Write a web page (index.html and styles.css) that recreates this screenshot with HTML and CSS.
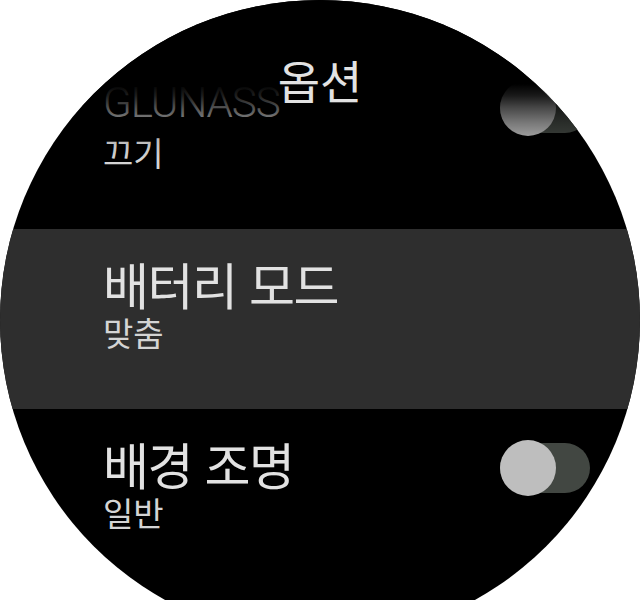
FILE: index.html
```html
<!DOCTYPE html>
<html lang="ko">
<head>
<meta charset="utf-8">
<link rel="stylesheet" href="styles.css">
</head>
<body>
<div class="watch">
  <div class="list">
    <div class="row">
      <div class="texts">
        <div class="title latin">GLUNASS</div>
        <div class="sub">끄기</div>
      </div>
      <div class="toggle"><span class="knob"></span></div>
    </div>
    <div class="row active">
      <div class="texts">
        <div class="title">배터리 모드</div>
        <div class="sub">맞춤</div>
      </div>
    </div>
    <div class="row">
      <div class="texts">
        <div class="title">배경 조명</div>
        <div class="sub">일반</div>
      </div>
      <div class="toggle"><span class="knob"></span></div>
    </div>
  </div>
  <div class="fade"></div>
  <div class="header">옵션</div>
</div>
</body>
</html>
```
FILE: styles.css
```css
html, body {
  margin: 0;
  padding: 0;
  width: 640px;
  height: 600px;
  overflow: hidden;
  background: #ffffff;
}
.watch {
  position: relative;
  width: 640px;
  height: 600px;
  clip-path: circle(320px at 320px 320px);
  background: #000;
  overflow: hidden;
  font-family: "Noto Sans CJK KR", "Noto Sans", sans-serif;
  color: #e2e2e2;
}
.list {
  display: flex;
  flex-direction: column;
  padding-top: 49px;
}
.row {
  height: 180px;
  flex: none;
  box-sizing: border-box;
  padding: 0 50px 0 103px;
  display: flex;
  align-items: flex-start;
  justify-content: space-between;
}
.row.active {
  background: #2e2e2e;
}
.texts {
  display: flex;
  flex-direction: column;
  padding-top: 26px;
}
.title {
  font-size: 50px;
  line-height: 56px;
  letter-spacing: -1.5px;
  white-space: nowrap;
}
.title.latin {
  font-family: Roboto, "Liberation Sans", sans-serif;
  font-weight: 300;
  font-size: 42px;
  letter-spacing: -1px;
  color: #d6d6d6;
}
.sub {
  font-size: 33px;
  line-height: 38px;
  color: #d4d4d4;
  margin-top: 2px;
}
.toggle {
  position: relative;
  margin-top: 34px;
  width: 90px;
  height: 50px;
  border-radius: 25px;
  background: #424742;
}
.knob {
  position: absolute;
  left: 0;
  top: -3px;
  width: 56px;
  height: 56px;
  border-radius: 50%;
  background: #bebebe;
}
.fade {
  position: absolute;
  left: 0;
  top: 0;
  width: 640px;
  height: 170px;
  background: linear-gradient(to bottom, #000 0, #000 84px, rgba(0,0,0,0.86) 96px, rgba(0,0,0,0.62) 108px, rgba(0,0,0,0.38) 122px, rgba(0,0,0,0.12) 140px, rgba(0,0,0,0) 160px);
}
.header {
  position: absolute;
  left: 0;
  right: 0;
  top: 50px;
  text-align: center;
  font-size: 46px;
  line-height: 58px;
  color: #e2e2e2;
}
```
